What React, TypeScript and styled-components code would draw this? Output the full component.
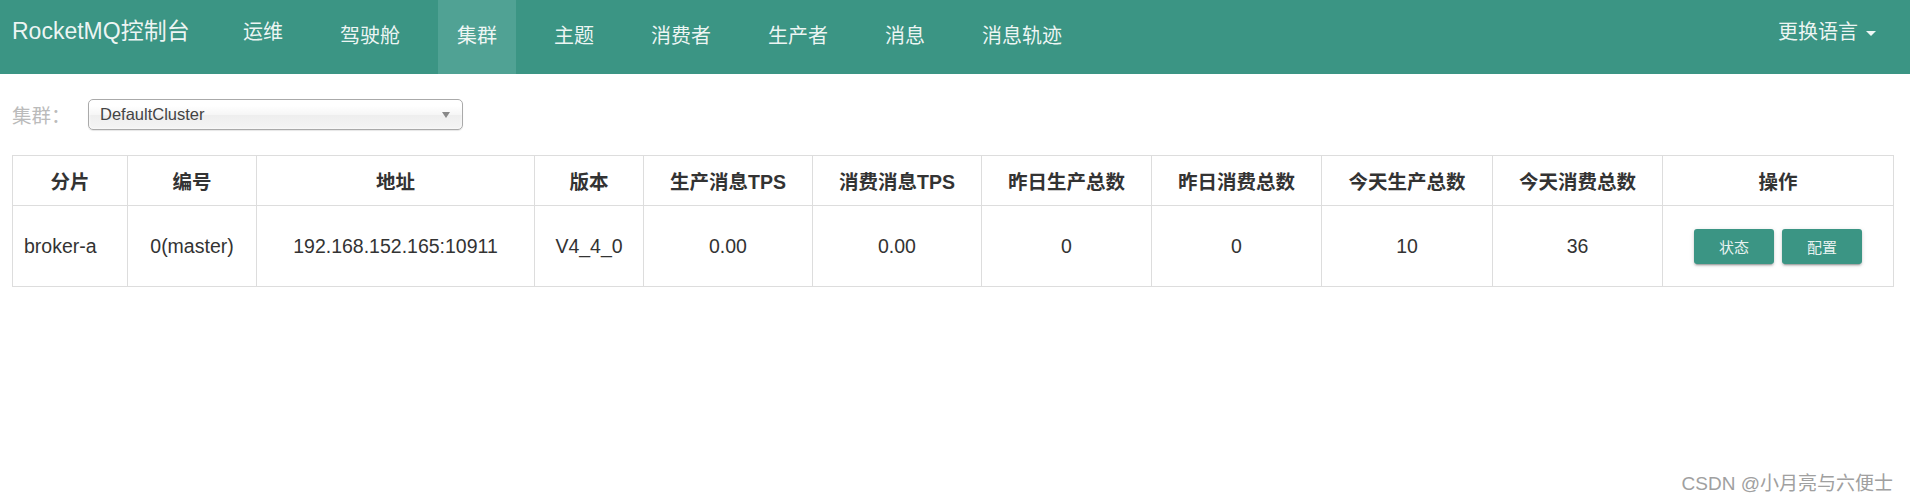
import { FC } from "react";
import styled, { createGlobalStyle, css } from "styled-components";

const teal = "#3b9584";
const tealActive = "#50a294";
const font = `"Liberation Sans", "Noto Sans CJK SC", sans-serif`;

const GlobalStyle = createGlobalStyle`
  html, body {
    margin: 0;
    padding: 0;
    background: #fff;
  }
  body {
    font-family: ${font};
    color: #333;
  }
`;

const navItems = ["运维", "驾驶舱", "集群", "主题", "消费者", "生产者", "消息", "消息轨迹"];

interface Column {
  title: string;
  width: number;
}

const columns: Column[] = [
  { title: "分片", width: 115 },
  { title: "编号", width: 129 },
  { title: "地址", width: 278 },
  { title: "版本", width: 109 },
  { title: "生产消息TPS", width: 169 },
  { title: "消费消息TPS", width: 169 },
  { title: "昨日生产总数", width: 170 },
  { title: "昨日消费总数", width: 170 },
  { title: "今天生产总数", width: 171 },
  { title: "今天消费总数", width: 170 },
  { title: "操作", width: 231 },
];

const brokers = [
  {
    name: "broker-a",
    index: "0(master)",
    addr: "192.168.152.165:10911",
    version: "V4_4_0",
    inTps: "0.00",
    outTps: "0.00",
    inYesterday: "0",
    outYesterday: "0",
    inToday: "10",
    outToday: "36",
  },
];

const App: FC = () => {
  return (
    <Page>
      <GlobalStyle />
      <Navbar>
        <Brand>RocketMQ控制台</Brand>
        <Nav>
          {navItems.map((item, i) => (
            <NavItem key={item} $active={item === "集群"} $raised={i === 0}>
              {item}
            </NavItem>
          ))}
        </Nav>
        <LangMenu>
          更换语言
          <Caret />
        </LangMenu>
      </Navbar>

      <Content>
        <FilterRow>
          <FilterLabel>集群：</FilterLabel>
          <Select>
            <span>DefaultCluster</span>
            <SelectArrow />
          </Select>
        </FilterRow>

        <Table>
          <colgroup>
            {columns.map((c) => (
              <col key={c.title} style={{ width: c.width }} />
            ))}
          </colgroup>
          <thead>
            <tr>
              {columns.map((c) => (
                <Th key={c.title}>{c.title}</Th>
              ))}
            </tr>
          </thead>
          <tbody>
            {brokers.map((b) => (
              <tr key={b.name}>
                <Td $left>{b.name}</Td>
                <Td>{b.index}</Td>
                <Td>{b.addr}</Td>
                <Td>{b.version}</Td>
                <Td>{b.inTps}</Td>
                <Td>{b.outTps}</Td>
                <Td>{b.inYesterday}</Td>
                <Td>{b.outYesterday}</Td>
                <Td>{b.inToday}</Td>
                <Td>{b.outToday}</Td>
                <Td>
                  <Actions>
                    <Button>状态</Button>
                    <Button>配置</Button>
                  </Actions>
                </Td>
              </tr>
            ))}
          </tbody>
        </Table>
      </Content>

      <Watermark>CSDN @小月亮与六便士</Watermark>
    </Page>
  );
};

const Page = styled.div`
  position: relative;
  min-height: 504px;
`;

const Navbar = styled.div`
  display: flex;
  align-items: stretch;
  height: 74px;
  padding-right: 15px;
  background: ${teal};
  color: rgba(255, 255, 255, 0.92);
`;

const Brand = styled.div`
  box-sizing: border-box;
  width: 224px;
  padding: 16px 0 0 12px;
  font-size: 23px;
  line-height: 31px;
  white-space: nowrap;
`;

const Nav = styled.div`
  display: flex;
  gap: 19px;
`;

const NavItem = styled.div<{ $active?: boolean; $raised?: boolean }>`
  padding: ${({ $raised }) => ($raised ? "18px" : "22px")} 19px 0;
  font-size: 20px;
  line-height: 29px;
  white-space: nowrap;
  ${({ $active }) =>
    $active &&
    css`
      background: ${tealActive};
    `}
`;

const LangMenu = styled.div`
  display: flex;
  align-items: flex-start;
  gap: 8px;
  margin-left: auto;
  padding: 18px 19px 0;
  font-size: 20px;
  line-height: 29px;
`;

const Caret = styled.span`
  width: 0;
  height: 0;
  margin-top: 13px;
  border-left: 5px solid transparent;
  border-right: 5px solid transparent;
  border-top: 5px solid rgba(255, 255, 255, 0.92);
`;

const Content = styled.div`
  padding: 25px 17px 0 12px;
`;

const FilterRow = styled.div`
  display: flex;
  align-items: center;
`;

const FilterLabel = styled.span`
  width: 76px;
  font-size: 19.5px;
  color: #bbb;
`;

const Select = styled.div`
  box-sizing: border-box;
  display: flex;
  align-items: center;
  justify-content: space-between;
  width: 375px;
  height: 31px;
  padding: 0 12px 0 11px;
  border: 1px solid #aaa;
  border-radius: 5px;
  background: linear-gradient(#fff 20%, #f6f6f6 50%, #eee 52%, #f4f4f4 100%);
  box-shadow: 0 0 3px #fff inset, 0 1px 1px rgba(0, 0, 0, 0.1);
  font-size: 16.5px;
  color: #444;
`;

const SelectArrow = styled.span`
  width: 0;
  height: 0;
  border-left: 4px solid transparent;
  border-right: 4px solid transparent;
  border-top: 6px solid #888;
`;

const Table = styled.table`
  width: 1881px;
  margin-top: 25px;
  border-collapse: collapse;
  table-layout: fixed;
  font-size: 19.5px;
  color: #333;
`;

const Th = styled.th`
  height: 49px;
  padding: 0 8px;
  border: 1px solid #ddd;
  font-weight: bold;
  text-align: center;
  white-space: nowrap;
`;

const Td = styled.td<{ $left?: boolean }>`
  height: 80px;
  padding: 0 8px 0 ${({ $left }) => ($left ? "11px" : "8px")};
  border: 1px solid #ddd;
  text-align: ${({ $left }) => ($left ? "left" : "center")};
  white-space: nowrap;
`;

const Actions = styled.div`
  display: flex;
  justify-content: center;
  gap: 8px;
`;

const Button = styled.button`
  width: 80px;
  height: 35px;
  padding: 0;
  border: none;
  border-radius: 3px;
  background: ${teal};
  color: rgba(255, 255, 255, 0.9);
  font-family: ${font};
  font-size: 15px;
  box-shadow: 0 2px 2px 0 rgba(0, 0, 0, 0.14), 0 3px 1px -2px rgba(0, 0, 0, 0.2),
    0 1px 5px 0 rgba(0, 0, 0, 0.12);
  cursor: pointer;
`;

const Watermark = styled.div`
  position: absolute;
  right: 17px;
  bottom: 9px;
  font-size: 19px;
  color: #a0a0a0;
  text-shadow: 0 0 2px #fff;
  white-space: nowrap;
`;

export default App;
